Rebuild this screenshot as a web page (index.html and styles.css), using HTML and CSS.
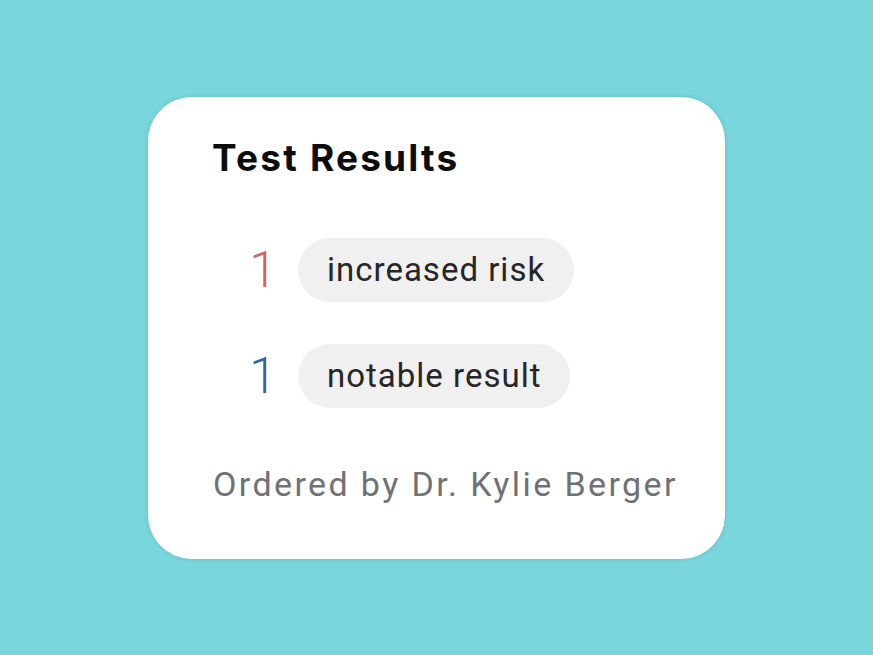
FILE: index.html
```html
<!DOCTYPE html>
<html lang="en">
<head>
<meta charset="utf-8">
<title>Test Results</title>
<link rel="stylesheet" href="styles.css">
</head>
<body>
<main class="card">
  <h1 class="title">Test Results</h1>
  <ul class="results">
    <li class="row">
      <span class="count count-risk">1</span>
      <span class="pill">increased risk</span>
    </li>
    <li class="row">
      <span class="count count-notable">1</span>
      <span class="pill">notable result</span>
    </li>
  </ul>
  <p class="ordered">Ordered by Dr. Kylie Berger</p>
</main>
</body>
</html>
```
FILE: styles.css
```css
html, body {
  margin: 0;
  padding: 0;
}
body {
  width: 873px;
  height: 655px;
  background: #79d6dc;
  display: flex;
  align-items: center;
  justify-content: center;
  font-family: Roboto, "Liberation Sans", sans-serif;
}
.card {
  box-sizing: border-box;
  width: 577px;
  height: 462px;
  background: #ffffff;
  border-radius: 44px;
  padding: 39px 0 0 64px;
  display: flex;
  flex-direction: column;
  box-shadow: 0 0 4px rgba(40, 120, 130, 0.25);
}
.title {
  margin: 0;
  font-family: Inter, Roboto, sans-serif;
  font-size: 37px;
  line-height: 44px;
  font-weight: 700;
  color: #0d0d0d;
  letter-spacing: 2.2px;
}
.results {
  list-style: none;
  margin: 58px 0 0 0;
  padding: 0 0 0 35px;
  display: flex;
  flex-direction: column;
  gap: 42px;
}
.row {
  display: flex;
  align-items: center;
  gap: 21px;
}
.count {
  font-size: 50px;
  font-weight: 300;
  line-height: 64px;
  width: 30px;
  text-align: right;
}
.count-risk { color: #d6615e; }
.count-notable { color: #2f67a4; }
.pill {
  height: 64px;
  display: flex;
  align-items: center;
  padding: 0 29px;
  border-radius: 32px;
  background: #f0f0f0;
  font-size: 33px;
  letter-spacing: 1px;
  color: #262626;
}
.ordered {
  margin: 56px 0 0 1px;
  font-size: 34px;
  line-height: 40px;
  letter-spacing: 2.4px;
  color: #6e7175;
}
```
